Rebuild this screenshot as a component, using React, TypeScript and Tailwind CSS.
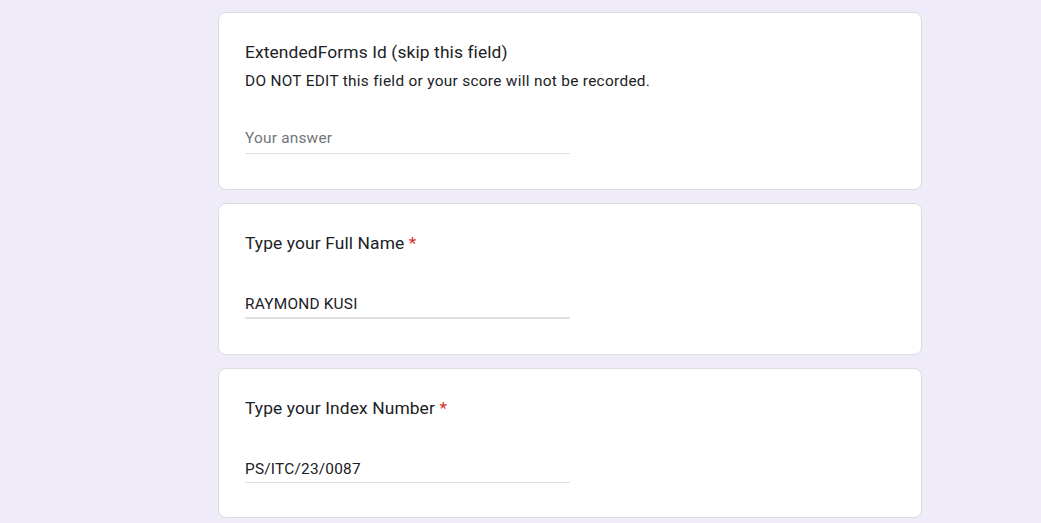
import React from "react";

const font = { fontFamily: "Roboto, 'Noto Sans', Arial, sans-serif" };

function Title({ text, required }: { text: string; required?: boolean }) {
  return (
    <div className="text-[17.4px] leading-[26px] tracking-[0.11px] text-[#202124]">
      {text}
      {required && <span className="text-[#d93025]"> *</span>}
    </div>
  );
}

export default function App() {
  return (
    <div className="min-h-[523px] w-full bg-[#f0ebf8] pt-[12px]" style={font}>
      <div className="ml-[218px] flex w-[704px] flex-col gap-[13px]">
        <div className="rounded-[8px] border border-[#dadce0] bg-white px-[26px] pt-[26px] pb-[35px]">
          <Title text="ExtendedForms Id (skip this field)" />
          <div className="mt-[5px] text-[15.4px] leading-[22px] tracking-[0.3px] text-[#202124]">
            DO NOT EDIT this field or your score will not be recorded.
          </div>
          <div className="mt-[35px] w-[325px]">
            <div className="text-[15.4px] leading-[22px] tracking-[0.22px] text-[#70757a]">Your answer</div>
            <div className="mt-[4px] h-px bg-[#e0e0e0]" />
          </div>
        </div>

        <div className="rounded-[8px] border border-[#dadce0] bg-white px-[26px] pt-[26px] pb-[35px]">
          <Title text="Type your Full Name" required />
          <div className="mt-[37px] w-[325px]">
            <div className="text-[15.4px] leading-[22px] tracking-[0.22px] text-[#202124]">RAYMOND KUSI</div>
            <div className="mt-[2px] h-[2px] bg-[#e0e0e0]" />
          </div>
        </div>

        <div className="rounded-[8px] border border-[#dadce0] bg-white px-[26px] pt-[26px] pb-[34px]">
          <Title text="Type your Index Number" required />
          <div className="mt-[37px] w-[325px]">
            <div className="text-[15.4px] leading-[22px] tracking-[0.22px] text-[#202124]">PS/ITC/23/0087</div>
            <div className="mt-[2px] h-px bg-[#e0e0e0]" />
          </div>
        </div>
      </div>
    </div>
  );
}
